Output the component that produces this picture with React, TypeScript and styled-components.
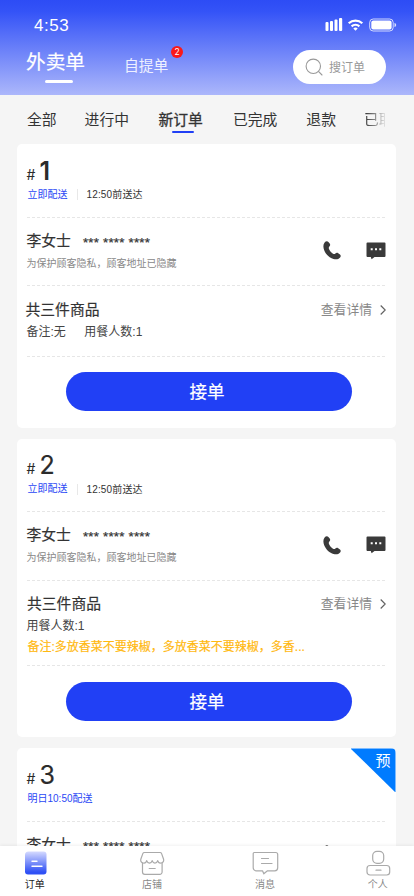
import React from "react";
import styled, { createGlobalStyle, css } from "styled-components";

const GlobalStyle = createGlobalStyle`
  * { box-sizing: border-box; }
  body {
    margin: 0;
    background: #f5f5f5;
    font-family: "Inter", "Noto Sans CJK SC", sans-serif;
    color: #333;
  }
  button { font-family: inherit; border: 0; padding: 0; background: none; color: inherit; }
`;

const medium = css`
  -webkit-text-stroke: 0.2px currentColor;
`;

const Screen = styled.div`
  width: 414px;
  height: 896px;
  display: flex;
  flex-direction: column;
  overflow: hidden;
  white-space: nowrap;
`;

const Header = styled.header`
  flex: none;
  height: 95px;
  display: flex;
  flex-direction: column;
  background: linear-gradient(180deg, #2d4cf5 0%, #3453f7 12%, #acb7fb 100%);
  color: #fff;
`;

const StatusBar = styled.div`
  height: 48px;
  padding: 13px 17px 0 34px;
  display: flex;
  justify-content: space-between;
  align-items: flex-start;
`;

const Clock = styled.span`
  font-family: "Liberation Sans", sans-serif;
  font-size: 17px;
  line-height: 26px;
  letter-spacing: 0.5px;
`;

const StatusIcons = styled.svg`
  margin-top: 4px;
  width: 72px;
  height: 16px;
`;

const HeaderRow = styled.div`
  display: flex;
  align-items: flex-start;
  padding-left: 26px;
`;

const MainTab = styled.div`
  width: 59px;
  display: flex;
  flex-direction: column;
  align-items: center;
  font-size: 19.7px;
  line-height: 28px;
  ${medium}
`;

const MainTabBar = styled.span`
  width: 28px;
  height: 3px;
  border-radius: 2px;
  margin: 4px 0 0 7px;
  background: #fff;
`;

const SideTab = styled.div`
  position: relative;
  margin-left: 39px;
  padding-top: 6px;
  font-size: 14.8px;
  line-height: 24px;
  color: #eef0ff;
`;

const Badge = styled.span`
  position: absolute;
  left: 47px;
  top: -2px;
  width: 12px;
  height: 12px;
  border-radius: 50%;
  background: #fa1919;
  color: #fff;
  font-size: 8.5px;
  line-height: 12px;
  text-align: center;
`;

const Search = styled.div`
  margin: 2px 28px 0 auto;
  width: 93px;
  height: 34px;
  border-radius: 17px;
  background: #fff;
  color: #999;
  display: flex;
  align-items: center;
  padding: 0 0 1px 12px;
  gap: 6px;
  font-size: 12px;
`;

const Tabs = styled.nav`
  flex: none;
  height: 49px;
  padding: 12px 29px 0 27px;
  display: flex;
  font-size: 14.8px;
  line-height: 26px;
`;

const Tab = styled.div<{ $active?: boolean; $gap?: number }>`
  flex: none;
  margin-left: ${(p) => p.$gap ?? 0}px;
  display: flex;
  flex-direction: column;
  align-items: center;
  ${(p) => p.$active && css`-webkit-text-stroke: 0.3px currentColor;`}
`;

const ActiveBar = styled.span`
  width: 22px;
  height: 2px;
  margin: -2px 0 0 5px;
  border-radius: 1px;
  background: #2140f5;
`;

const FadedTab = styled.div`
  width: 22px;
  margin-left: 28px;
  overflow: hidden;
  mask-image: linear-gradient(90deg, #000 5%, rgba(0, 0, 0, 0.1) 100%);
`;

const List = styled.main`
  flex: 1;
  min-height: 0;
  overflow: hidden;
  padding: 0 18.5px 0 17px;
  display: flex;
  flex-direction: column;
  gap: 11px;
`;

const Card = styled.article`
  position: relative;
  flex: none;
  border-radius: 5px;
  background: #fff;
  padding: 0 9.5px;
  overflow: hidden;
`;

const Dash = styled.div`
  height: 1px;
  background: repeating-linear-gradient(90deg, #e6e6e6 0 3px, transparent 3px 5px);
`;

const NumberBlock = styled.section`
  height: 72.6px;
  padding-top: 10.5px;
`;

const OrderNumber = styled.div`
  display: flex;
  align-items: baseline;
  gap: 4px;
  height: 32px;
  line-height: 32px;
  font-size: 25px;
  color: #2b2b2b;
`;

const Numeral = styled.span<{ $strong?: boolean }>`
  font-weight: ${(p) => (p.$strong ? 600 : 400)};
  ${(p) => !p.$strong && medium}
`;

const Hash = styled.span`
  font-size: 14px;
`;

const Delivery = styled.div`
  display: flex;
  align-items: center;
  margin-left: 1px;
  font-family: "Liberation Sans", "Noto Sans CJK SC", sans-serif;
  font-size: 10px;
  line-height: 16px;
`;

const DeliveryMode = styled.span`
  color: #2a48f5;
`;

const DeliveryTime = styled.span`
  margin-left: 9px;
  padding-left: 9px;
  border-left: 1px solid #e8e8e8;
  line-height: 11px;
  letter-spacing: 0.15px;
`;

const Customer = styled.section`
  height: 67.5px;
  display: flex;
  align-items: flex-start;
  padding-top: 12px;
`;

const CustomerText = styled.div`
  flex: 1;
`;

const CustomerName = styled.div`
  font-size: 14.8px;
  line-height: 22px;
  display: flex;
  ${medium}
`;

const Phone = styled.span`
  margin-left: 12px;
  font-family: "Liberation Sans", sans-serif;
  font-size: 13.3px;
  line-height: 25px;
  height: 22px;
  letter-spacing: 0.22px;
`;

const Privacy = styled.div`
  font-size: 10px;
  line-height: 22px;
  color: #888;
`;

const ContactIcons = styled.div`
  display: flex;
  align-items: center;
  gap: 25px;
  padding-top: 11.5px;
`;

const Goods = styled.section<{ $tall?: boolean }>`
  height: ${(p) => (p.$tall ? 84.5 : 69.7)}px;
  padding-top: 12.5px;
`;

const GoodsHead = styled.div`
  display: flex;
  justify-content: space-between;
  align-items: center;
  height: 22px;
  line-height: 22px;
`;

const GoodsTitle = styled.span<{ $shift?: boolean }>`
  margin-left: ${(p) => (p.$shift ? 0.5 : -1)}px;
  font-size: 14.8px;
  ${medium}
`;

const Details = styled.span`
  display: flex;
  align-items: center;
  gap: 8px;
  font-size: 12.8px;
  color: #888;
`;

const GoodsLine = styled.div<{ $accent?: boolean }>`
  display: flex;
  gap: 18.5px;
  margin-left: ${(p) => (p.$accent ? 1 : 0)}px;
  font-family: "Liberation Sans", "Noto Sans CJK SC", sans-serif;
  font-size: 12px;
  line-height: ${(p) => (p.$accent ? 20 : 22)}px;
  color: ${(p) => (p.$accent ? "#ffb911" : "#444")};
  ${(p) => p.$accent && medium}
`;

const Action = styled.section`
  height: 71px;
  padding: 15.7px 34px 0 39.5px;
`;

const Accept = styled.button`
  display: block;
  width: 286px;
  height: 39px;
  padding-right: 4px;
  border-radius: 19.5px;
  background: #2140f5;
  color: #fff;
  font-size: 17.6px;
  line-height: 37px;
  ${medium}
`;

const Ribbon = styled.div`
  position: absolute;
  top: 0;
  right: 0;
  width: 45px;
  height: 44px;
  background: #007bff;
  clip-path: polygon(0 0, 100% 0, 100% 100%);
  color: #fff;
  font-size: 15px;
  line-height: 25px;
  text-align: right;
  padding-right: 5px;
`;

const BottomNav = styled.nav`
  flex: none;
  height: 50px;
  background: #fff;
  box-shadow: 0 -1px 3px rgba(0, 0, 0, 0.06);
  position: relative;
  display: grid;
  grid-template-columns: 95.5px 113px 113px 92.5px;
`;

const NavItem = styled.button<{ $active?: boolean; $first?: boolean; $last?: boolean }>`
  display: flex;
  flex-direction: column;
  align-items: center;
  padding: ${(p) => (p.$first ? "3px 26px 0 0" : p.$last ? "3px 0 0 20px" : "3px 0 0 0")};
  font-size: 10px;
  line-height: 15px;
  color: ${(p) => (p.$active ? "#222" : "#888")};
`;

const NavIcon = styled.svg`
  width: 28px;
  height: 27px;
  margin-bottom: 1px;
  overflow: visible;
  fill: none;
  stroke: #aaa;
  stroke-width: 1.2;
  stroke-linecap: round;
  stroke-linejoin: round;
`;

const PhoneIcon = () => (
  <svg width="18" height="19" viewBox="0 0 18 19" fill="#3a3a3a">
    <path d="M1.600 1.600C2.600.3 4.300-.1 5.400 1l1.300 1.500c.7.900.6 1.900-.1 2.800-.9 1-1.100 1.500-.5 2.900.8 1.900 2.100 3.400 3.900 4.500.9.6 1.600.4 2.400-.2.9-.8 1.900-.8 2.800-.2l1.800 1.300c1 .8.9 1.900.1 2.800-1.500 1.900-3.900 2.400-6.600 1.600C6.800 17 2.900 13.600 1.200 9.200.1 6.200 0 3.600 1.600 1.600Z" />
  </svg>
);

const ChatIcon = () => (
  <svg width="20" height="18" viewBox="0 0 20 18">
    <path d="M1.500.5h17a1 1 0 0 1 1 1V14a1 1 0 0 1-1 1H8.500L5.600 17.200 4.800 15H1.500a1 1 0 0 1-1-1V1.500a1 1 0 0 1 1-1Z" fill="#3a3a3a" />
    <path d="M4.700 6.300h2v2h-2zm4.300 0h2v2H9zm4.300 0h2v2h-2z" fill="#fff" />
  </svg>
);

type Order = { no: number; mode: string; time?: string; guests: string; note?: string; remark?: string; preorder?: boolean };

const orders: Order[] = [
  { no: 1, mode: "立即配送", time: "12:50前送达", guests: "用餐人数:1", note: "备注:无" },
  { no: 2, mode: "立即配送", time: "12:50前送达", guests: "用餐人数:1", remark: "备注:多放香菜不要辣椒，多放香菜不要辣椒，多香..." },
  { no: 3, mode: "明日10:50配送", guests: "用餐人数:1", preorder: true },
];

const OrderCard = ({ order }: { order: Order }) => (
  <Card>
    {order.preorder && <Ribbon>预</Ribbon>}
    <NumberBlock>
      <OrderNumber><Hash>#</Hash><Numeral $strong={order.no === 1}>{order.no}</Numeral></OrderNumber>
      <Delivery>
        <DeliveryMode>{order.mode}</DeliveryMode>
        {order.time && <DeliveryTime>{order.time}</DeliveryTime>}
      </Delivery>
    </NumberBlock>
    <Dash />
    <Customer>
      <CustomerText>
        <CustomerName>李女士<Phone>*** **** ****</Phone></CustomerName>
        <Privacy>为保护顾客隐私，顾客地址已隐藏</Privacy>
      </CustomerText>
      <ContactIcons><PhoneIcon /><ChatIcon /></ContactIcons>
    </Customer>
    {!order.preorder && (
      <>
        <Dash />
        <Goods $tall={!!order.remark}>
          <GoodsHead>
            <GoodsTitle $shift={!!order.remark}>共三件商品</GoodsTitle>
            <Details>
              查看详情
              <svg width="6" height="10" viewBox="0 0 6 10" fill="none" stroke="#666" strokeWidth="1.2"><path d="m.7.5 4.500 4.500L.7 9.500" /></svg>
            </Details>
          </GoodsHead>
          <GoodsLine>{order.note && <span>{order.note}</span>}<span>{order.guests}</span></GoodsLine>
          {order.remark && <GoodsLine $accent>{order.remark}</GoodsLine>}
        </Goods>
        <Dash />
        <Action><Accept>接单</Accept></Action>
      </>
    )}
  </Card>
);

export default function App() {
  return (
    <>
      <GlobalStyle />
      <Screen>
        <Header>
          <StatusBar>
            <Clock>4:53</Clock>
            <StatusIcons viewBox="0 0 72 16" fill="#fff">
              <rect x="0.500" y="5" width="3" height="9" rx="1" />
              <rect x="5" y="4" width="3" height="10" rx="1" />
              <rect x="9.500" y="2.500" width="3" height="11.500" rx="1" />
              <rect x="14" y="1" width="3.200" height="13" rx="1" />
              <g fill="none" stroke="#fff" strokeWidth="2.200">
                <path d="M23.700 6.300a10 10 0 0 1 13.600 0" />
                <path d="M26.600 9.400a5.800 5.800 0 0 1 7.800 0" />
              </g>
              <path d="m30.500 13.700-2.200-2.200a3.200 3.200 0 0 1 4.400 0Z" />
              <rect x="44.700" y="2" width="23.500" height="12" rx="3.500" fill="none" stroke="#fff" strokeOpacity="0.75" />
              <rect x="46.300" y="3.600" width="20.300" height="8.800" rx="2" />
              <path d="M69.500 6c2.200.6 2.200 3.400 0 4Z" opacity="0.8" />
            </StatusIcons>
          </StatusBar>
          <HeaderRow>
            <MainTab>外卖单<MainTabBar /></MainTab>
            <SideTab>自提单<Badge>2</Badge></SideTab>
            <Search>
              <svg width="18" height="18" viewBox="0 0 18 18" fill="none" stroke="#999" strokeWidth="1.100" strokeLinecap="round">
                <circle cx="8.300" cy="8.300" r="7.200" /><path d="m13.700 13.700 3.300 3.300" />
              </svg>
              搜订单
            </Search>
          </HeaderRow>
        </Header>
        <Tabs>
          <Tab>全部</Tab>
          <Tab $gap={28}>进行中</Tab>
          <Tab $gap={29.500} $active>新订单<ActiveBar /></Tab>
          <Tab $gap={30}>已完成</Tab>
          <Tab $gap={29}>退款</Tab>
          <FadedTab>已取消</FadedTab>
        </Tabs>
        <List>
          {orders.map((o) => <OrderCard key={o.no} order={o} />)}
        </List>
        <BottomNav>
          <NavItem $first $active>
            <NavIcon viewBox="0 0 28 27">
              <defs>
                <linearGradient id="tabFill" x1="0" y1="0" x2="0" y2="1">
                  <stop offset="0" stopColor="#d5daff" />
                  <stop offset="0.900" stopColor="#2f50f5" />
                </linearGradient>
              </defs>
              <path d="M7.500 2.500h15a3 3 0 0 1 3 3v17a3 3 0 0 1-3 3H7a3 3 0 0 1-3-3V6A3.500 3.500 0 0 1 7.500 2.500Z" fill="url(#tabFill)" stroke="none" />
              <path d="M11 12.200h5M11 17.300h10" stroke="#fff" strokeWidth="1.400" />
            </NavIcon>
            订单
          </NavItem>
          <NavItem>
            <NavIcon viewBox="0 0 28 27">
              <path d="M6.500 3.500h15.500q1.200 0 1.600 1.100l2 5.600c.8 4.300-4.900 5.300-5.900 1.400-1 3.300-4.500 3.300-5.500 0-1 3.300-4.500 3.300-5.500 0-1 3.900-6.700 2.900-5.900-1.400l2-5.600Q5.200 3.500 6.500 3.500Z" />
              <path d="M4.500 14V23a2.300 2.300 0 0 0 2.300 2.300h15a2.300 2.300 0 0 0 2.300-2.300v-9M11.200 19.500h6" />
            </NavIcon>
            店铺
          </NavItem>
          <NavItem>
            <NavIcon viewBox="0 0 28 27">
              <path d="M3.700 3.500h21a2 2 0 0 1 2 2v13.300a3 3 0 0 1-3 3h-7.200l-3.700 3-1.300-3h-6.300a3 3 0 0 1-3-3V4.500a1 1 0 0 1 1-1ZM10.500 9.500h7M10.500 14.500h10.500" />
            </NavIcon>
            消息
          </NavItem>
          <NavItem $last>
            <NavIcon viewBox="0 0 28 27">
              <rect x="8.700" y="2.300" width="11" height="12" rx="4.300" />
              <rect x="3" y="16.500" width="22.700" height="9.500" rx="3" />
              <path d="M12 21.200h5" />
            </NavIcon>
            个人
          </NavItem>
        </BottomNav>
      </Screen>
    </>
  );
}
